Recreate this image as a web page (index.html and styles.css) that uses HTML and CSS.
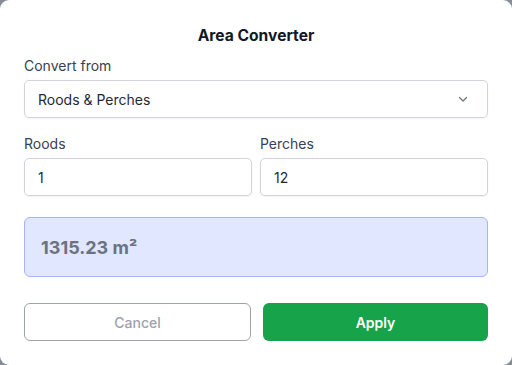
FILE: index.html
```html
<!DOCTYPE html>
<html lang="en">
<head>
  <meta charset="UTF-8">
  <meta name="viewport" content="width=device-width, initial-scale=1.0">
  <title>Area Converter</title>
  <link rel="stylesheet" href="styles.css">
</head>
<body>
  <div class="modal">
    <h2 class="title">Area Converter</h2>

    <label class="label">Convert from</label>
    <div class="select">
      <span>Roods &amp; Perches</span>
      <svg class="chevron" width="12" height="12" viewBox="0 0 12 12">
        <path d="M2.5 4.5 L6 8 L9.5 4.5" fill="none" stroke="#6b7280" stroke-width="1.2" stroke-linecap="round" stroke-linejoin="round"/>
      </svg>
    </div>

    <div class="row">
      <div class="field">
        <label class="label">Roods</label>
        <input class="input" type="text" value="1">
      </div>
      <div class="field">
        <label class="label">Perches</label>
        <input class="input" type="text" value="12">
      </div>
    </div>

    <div class="result">1315.23 m²</div>

    <div class="actions">
      <button class="btn cancel">Cancel</button>
      <button class="btn apply">Apply</button>
    </div>
  </div>
</body>
</html>
```

FILE: styles.css
```css
* {
  box-sizing: border-box;
  margin: 0;
  padding: 0;
}

body {
  font-family: 'Inter', 'Liberation Sans', sans-serif;
  background: #868b95;
  color: #374151;
  width: 512px;
  height: 365px;
  overflow: hidden;
}

.modal {
  background: #ffffff;
  border-radius: 9px;
  height: 365px;
  padding: 24px 24px 0;
  display: flex;
  flex-direction: column;
}

.title {
  font-size: 15.6px;
  line-height: 24px;
  font-weight: 700;
  color: #111827;
  text-align: center;
  margin-bottom: 8px;
}

.label {
  display: block;
  font-size: 14px;
  line-height: 20px;
  color: #374151;
  margin-bottom: 4px;
}

.select {
  display: flex;
  align-items: center;
  justify-content: space-between;
  height: 38px;
  padding: 0 18px 0 13px;
  border: 1px solid #d1d5db;
  border-radius: 5px;
  font-size: 14px;
  color: #1f2937;
  box-shadow: 0 1px 2px rgba(0, 0, 0, 0.05);
}

.row {
  display: flex;
  gap: 8px;
  margin-top: 16px;
}

.field {
  flex: 1;
}

.input {
  width: 100%;
  height: 38px;
  padding: 0 13px;
  border: 1px solid #d1d5db;
  border-radius: 5px;
  font-family: inherit;
  font-size: 14px;
  color: #1f2937;
  background: #ffffff;
  box-shadow: 0 1px 2px rgba(0, 0, 0, 0.05);
  outline: none;
}

.result {
  margin-top: 21px;
  height: 60px;
  padding: 0 16px;
  display: flex;
  align-items: center;
  background: #e0e7ff;
  border: 1px solid #a5b4fc;
  border-radius: 6px;
  font-size: 18px;
  font-weight: 700;
  color: #6b7280;
}

.actions {
  display: flex;
  gap: 12px;
  margin-top: 26px;
}

.btn {
  flex: 1;
  height: 38px;
  border-radius: 6px;
  font-family: inherit;
  font-size: 14px;
  cursor: pointer;
}

.cancel {
  background: #ffffff;
  border: 1px solid #9ca3af;
  color: #9ca3af;
  font-weight: 500;
}

.apply {
  background: #16a34a;
  border: none;
  color: #ffffff;
  font-weight: 600;
}
```
